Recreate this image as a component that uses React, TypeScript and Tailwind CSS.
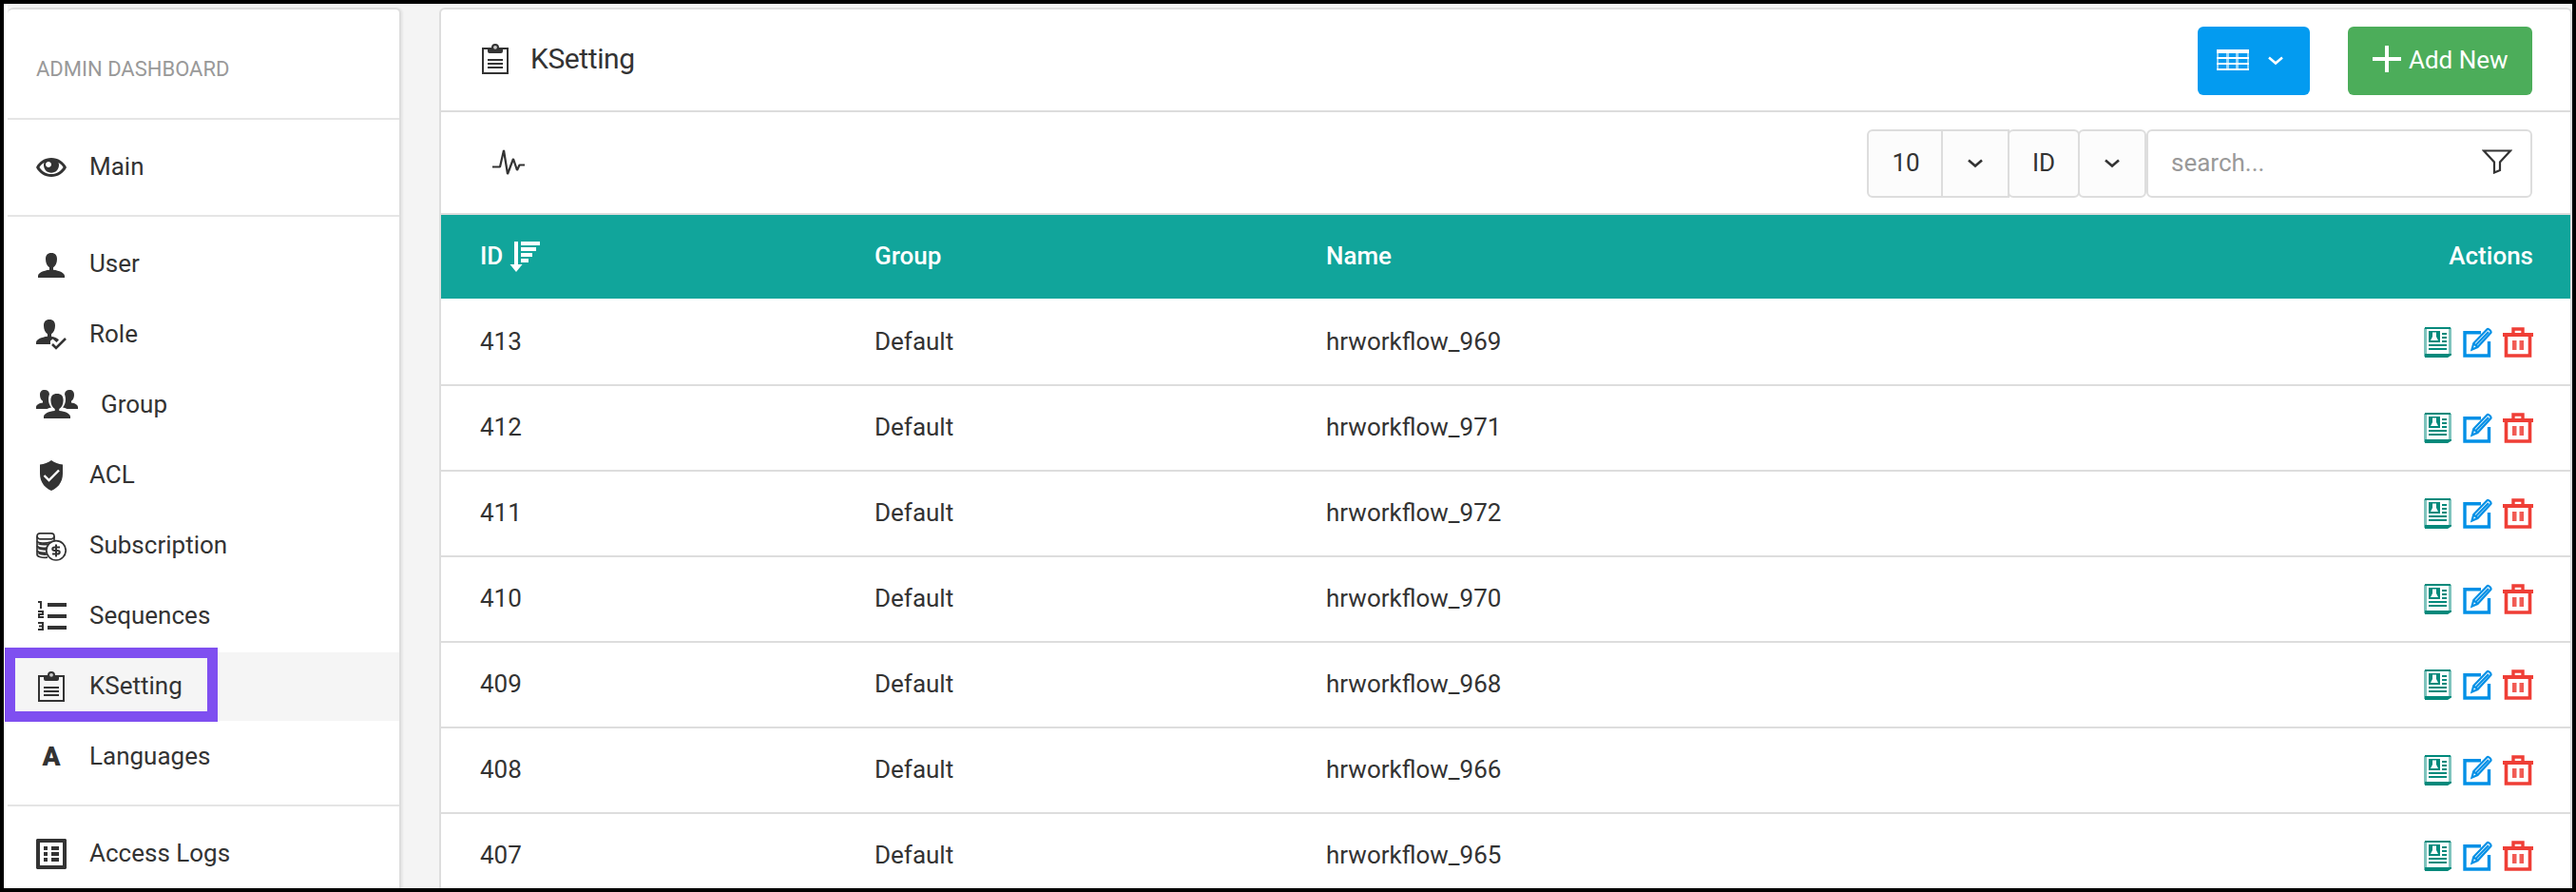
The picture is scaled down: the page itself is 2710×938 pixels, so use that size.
import type { ReactNode } from "react";

type IconProps = { className?: string; width?: number; children: ReactNode };

function Glyph({ className = "", width = 32, children }: IconProps) {
  return (
    <svg width={width} height={32} viewBox={`0 0 ${width} 32`} fill="currentColor" className={`shrink-0 ${className}`}>
      {children}
    </svg>
  );
}

const EyeIcon = () => (
  <Glyph>
    <path d="M16 6c-6.979 0-13.028 4.064-16 10 2.972 5.936 9.021 10 16 10s13.027-4.064 16-10c-2.972-5.936-9.021-10-16-10zM23.889 11.303c1.88 1.199 3.473 2.805 4.67 4.697-1.197 1.891-2.79 3.498-4.67 4.697-2.362 1.507-5.09 2.303-7.889 2.303s-5.527-0.796-7.889-2.303c-1.88-1.199-3.473-2.805-4.67-4.697 1.197-1.891 2.79-3.498 4.67-4.697 0.122-0.078 0.246-0.154 0.371-0.228-0.311 0.854-0.482 1.776-0.482 2.737 0 4.418 3.582 8 8 8s8-3.582 8-8c0-0.962-0.17-1.883-0.482-2.737 0.124 0.074 0.248 0.15 0.371 0.228zM16 13c0 1.657-1.343 3-3 3s-3-1.343-3-3 1.343-3 3-3 3 1.343 3 3z" />
  </Glyph>
);

const UserIcon = () => (
  <Glyph>
    <path d="M16 4c-4.200 0-6 2.400-6 6.600 0 3.700 1.500 7.200 4 8.700v2.500C7.500 22.500 2 25.200 2 28.200V30h28v-1.800c0-3-5.500-5.700-12-6.400v-2.500c2.500-1.500 4-5 4-8.700C22 6.400 20.200 4 16 4z" />
  </Glyph>
);

const RoleIcon = () => (
  <Glyph>
    <path d="M14 0c-4.200 0-6 2.400-6 6.600 0 3.700 1.500 7.200 4 8.700v2.500C5.500 18.500 0 21.200 0 24.200V26h15v-3.500l2.500-2 4 3.500 2.500-2.600c-2-1.800-4.800-3-8-3.600v-2.500c2.500-1.500 4-5 4-8.700C20 2.400 18.200 0 14 0z" />
    <path d="M17 26l4 4 10-10" fill="none" stroke="currentColor" strokeWidth="2.600" />
  </Glyph>
);

const GroupIcon = () => (
  <Glyph width={44}>
    <path d="M9 0C5.500 0 4 2 4 5.200c0 2.800 1.200 5.400 3 6.600v1.700C3 14 0 15.800 0 18.200V20h11.500c1.500-.8 3-1.300 4.500-1.500-1.800-2.300-3-5-3-8.500 0-2.300.5-4 1-5.500C13.700 1.500 12 0 9 0z" />
    <path d="M35 0c3.500 0 5 2 5 5.200 0 2.800-1.200 5.400-3 6.600v1.700c4 .5 7 2.300 7 4.700V20H32.500c-1.500-.8-3-1.300-4.500-1.500 1.800-2.300 3-5 3-8.500 0-2.300-.5-4-1-5.500C30.300 1.500 32 0 35 0z" />
    <path d="M22 4c-4.600 0-6.600 2.600-6.600 7 0 4 1.600 7.400 4.300 9v2C13.500 22.600 8 25 8 28v2h28v-2c0-3-5.500-5.400-11.700-6v-2c2.700-1.600 4.300-5 4.300-9 0-4.400-2-7-6.600-7z" />
  </Glyph>
);

const ShieldIcon = () => (
  <Glyph>
    <path d="M16 0c3.500 2.500 7.500 4 12 4.500V14c0 8-4 14.500-12 18C8 28.500 4 22 4 14V4.500C8.500 4 12.500 2.500 16 0z" />
    <path d="M8.500 16l5 5L24 10.500" fill="none" stroke="#fff" strokeWidth="2.400" />
  </Glyph>
);

const CoinsIcon = () => (
  <Glyph>
    <g fill="none" stroke="currentColor" strokeWidth="1.700">
      <rect x="1" y="2.800" width="18" height="6" rx="3" />
      <path d="M1 6v19c0 2.600 5 3.600 11 3.200M19 6v4" />
      <path d="M1 11c1 2.400 9 2.600 14 1M1 16c1 2 6 2.700 10.500 2.200M1 21c1 2 5 2.600 9.500 2.300M2 13.500c3 1.500 7 1.500 11 .8M2 18.500c3 1.500 6 1.500 9 1.300M2 23.500c3 1.700 6 1.700 9 1.500" />
      <circle cx="21" cy="20.800" r="10.200" fill="#fff" />
      <path d="M25 17.500h-5.500c-3 0-3 3.500 0 3.500h3c3 0 3 3.600 0 3.600H17M21 14.500v13" strokeWidth="2" />
    </g>
  </Glyph>
);

const NumberedIcon = () => (
  <Glyph>
    <path d="M12 2h20v4H12zM12 14h20v4H12zM12 26h20v4H12z" />
    <path d="M2 1h3v7M2 11h5v3H3v3h5M2 23h5v7H2M3 26.500h4" fill="none" stroke="currentColor" strokeWidth="2" />
  </Glyph>
);

const ClipboardIcon = () => (
  <Glyph>
    <path
      fillRule="evenodd"
      d="M2 4h28v28H2zM4 6v24h24V6h-4v2a2 2 0 0 1-2 2H10a2 2 0 0 1-2-2V6z M16 0a4 4 0 0 0-4 4h8a4 4 0 0 0-4-4z"
    />
    <circle cx="16" cy="3.800" r="1.900" fill="#fff" fillOpacity=".75" />
    <path d="M8 16h16v2H8zM8 20h16v2H8zM8 24h16v2H8z" />
  </Glyph>
);

const LetterIcon = () => (
  <span className="flex h-8 w-8 items-center justify-center text-[28px] leading-8 font-black">A</span>
);

const LogsIcon = () => (
  <Glyph>
    <path fillRule="evenodd" d="M1 0h30l1 1v30l-1 1H1l-1-1V1zM4 4v24h24V4z" />
    <path d="M8 8h4v4H8zM16 8h8v4h-8zM8 14h4v4H8zM16 14h8v4h-8zM8 20h4v4H8zM16 20h8v4h-8z" />
  </Glyph>
);

const PulseIcon = () => (
  <svg
    width="34"
    height="30"
    viewBox="0 0 34 30"
    fill="none"
    stroke="currentColor"
    strokeWidth="2.200"
    strokeLinejoin="bevel"
    className="mb-0.5"
  >
    <path d="M0 19.500h8L12 2l4 25 6-16 4 12 2.500-5.500H34" />
  </svg>
);

const SortIcon = () => (
  <Glyph className="text-white">
    <path d="M5 0h4v24h4.500L7 32 .500 24H5zM12 0h20v4H12zM12 6h16v4H12zM12 12h12v4H12zM12 18h8v4h-8z" />
  </Glyph>
);

const Chevron = () => (
  <svg width="16" height="10" viewBox="0 0 16 10" fill="none" stroke="currentColor" strokeWidth="2.600">
    <path d="M1 1.500l7 6 7-6" />
  </svg>
);

const TableIcon = () => (
  <svg width="34" height="22" viewBox="0 0 34 22" fill="currentColor" className="mb-0.5">
    <path d="M0 0h34v4H0zM0 8h34v2H0zM0 14h34v2H0zM0 20h34v2H0z" />
    <path d="M0 0h2v22H0zM10 2h3v20h-3zM20 2h3v20h-3zM32 0h2v22h-2z" fillOpacity=".6" />
  </svg>
);

const PlusIcon = () => (
  <svg width="30" height="28" viewBox="0 0 30 28" fill="currentColor" className="mb-1">
    <path d="M13 0h4v12h13v4H17v12h-4V16H0v-4h13z" />
  </svg>
);

const FilterIcon = () => (
  <svg
    width="32"
    height="26"
    viewBox="0 0 32 26"
    fill="none"
    stroke="currentColor"
    strokeWidth="2.200"
    className="mb-1"
  >
    <path d="M2 1.500h28L19 13.500v8.500L13 24.500v-11z" />
  </svg>
);

const DetailIcon = () => (
  <Glyph className="text-[#00897b]">
    <path d="M1 1h3v30H1zM27 1h3v28h-3z" fillOpacity=".5" />
    <path d="M2 0h27v2H2zM2 28h28v1.500L26 32H2z" />
    <path d="M6 4h12v12H6zM20 6h5v2h-5zM20 10h5v2h-5zM20 14h5v2h-5zM6 18h19v2H6zM6 22h19v2H6z" />
    <path d="M10 5.500h4v4.500l2 4H8l2-4z" fill="#fff" />
  </Glyph>
);

const EditIcon = () => (
  <Glyph className="text-[#0290e6]">
    <path d="M19 5.800H2V30H27.500V15" fill="none" stroke="currentColor" strokeWidth="3.400" />
    <path
      d="M9.500 23.500l1.800-6.500L25.500 2.200c1.200-1.200 5 2.200 3.800 3.800L15.500 21zM11.500 17.500l4 3.500M14 18.500L27 5"
      fill="none"
      stroke="currentColor"
      strokeWidth="2.200"
    />
  </Glyph>
);

const TrashIcon = () => (
  <Glyph className="text-[#ef3e36]">
    <path d="M0 6h32v4H0z" />
    <path d="M11 7V2h10v5" fill="none" stroke="currentColor" strokeWidth="3.400" />
    <path d="M3.500 9v21h25V9" fill="none" stroke="currentColor" strokeWidth="3.600" />
    <path d="M10 14h4.500v10H10zM17.500 14H22v10h-4.500z" fillOpacity=".85" />
  </Glyph>
);

type Item = { label: string; icon: ReactNode; active?: boolean };

const sections: Item[][] = [
  [{ label: "Main", icon: <EyeIcon /> }],
  [
    { label: "User", icon: <UserIcon /> },
    { label: "Role", icon: <RoleIcon /> },
    { label: "Group", icon: <GroupIcon /> },
    { label: "ACL", icon: <ShieldIcon /> },
    { label: "Subscription", icon: <CoinsIcon /> },
    { label: "Sequences", icon: <NumberedIcon /> },
    { label: "KSetting", icon: <ClipboardIcon />, active: true },
    { label: "Languages", icon: <LetterIcon /> },
  ],
  [{ label: "Access Logs", icon: <LogsIcon /> }],
];

const rows = [
  { id: 413, name: "hrworkflow_969" },
  { id: 412, name: "hrworkflow_971" },
  { id: 411, name: "hrworkflow_972" },
  { id: 410, name: "hrworkflow_970" },
  { id: 409, name: "hrworkflow_968" },
  { id: 408, name: "hrworkflow_966" },
  { id: 407, name: "hrworkflow_965" },
];

function Sidebar() {
  return (
    <aside className="mt-1 ml-1 h-[940px] w-[414px] shrink-0 rounded-t-md border-t-2 border-r-2 border-[#ddd] bg-white shadow-[2px_0_2px_rgba(0,0,0,0.05)]">
      <div className="flex h-[114px] items-center pt-3 pl-[30px] text-[22px] text-[#999] uppercase">
        Admin Dashboard
      </div>
      {sections.map((items, i) => (
        <nav key={i} className="flex flex-col gap-0.5 border-t-2 border-[#e5e5e5] py-3.5">
          {items.map((item) => (
            <a
              key={item.label}
              className={`relative flex h-[72px] items-center gap-6 pl-[30px] ${item.active ? "bg-[#f5f5f5]" : ""}`}
            >
              {item.icon}
              <span className="pb-0.5">{item.label}</span>
              {item.active && (
                <span className="absolute -top-[5px] -left-[3px] h-[78px] w-[224px] border-[11px] border-[#7f4ff0]" />
              )}
            </a>
          ))}
        </nav>
      ))}
    </aside>
  );
}

function Toolbar() {
  const box = "flex h-[72px] items-center justify-center border-2 border-[#ddd] bg-[#fcfcfc]";
  return (
    <div className="flex h-[108px] items-center justify-between border-b-2 border-[#ddd] pt-0.5 pr-10 pl-[54px]">
      <PulseIcon />
      <div className="flex">
        <div className={`${box} w-20 rounded-l-md pb-0.5 pl-0.5`}>10</div>
        <div className={`${box} -ml-0.5 w-[72px]`}>
          <Chevron />
        </div>
        <div className={`${box} -ml-0.5 w-[76px] rounded-md pb-0.5`}>ID</div>
        <div className={`${box} -ml-0.5 w-[72px] rounded-md`}>
          <Chevron />
        </div>
        <div className="flex h-[72px] w-[406px] items-center justify-between rounded-md border-2 border-[#ddd] bg-white pr-[19px] pl-6">
          <span className="pb-0.5 text-[#999]">search...</span>
          <FilterIcon />
        </div>
      </div>
    </div>
  );
}

const columns = "grid grid-cols-[415px_475px_1fr_auto] items-center pr-[39px] pl-[41px]";

export default function App() {
  return (
    <div className="h-[938px] w-[2710px] overflow-hidden border-4 border-black bg-[linear-gradient(to_right,#fff_4px,#f4f4f4_4px)] font-['Roboto',sans-serif] text-[26px] leading-10 text-[#333]">
      <div className="flex h-full items-start overflow-hidden">
        <Sidebar />
        <main className="mt-1 ml-10 h-[940px] w-[2244px] shrink-0 rounded-t-md border-2 border-[#ddd] bg-white">
          <header className="flex h-[108px] items-center justify-between border-b-2 border-[#ddd] pt-0.5 pr-10 pl-[41px]">
            <div className="flex items-center gap-[21px] pb-1 text-[30px] tracking-[-0.4px]">
              <ClipboardIcon />
              <span>KSetting</span>
            </div>
            <div className="flex gap-10 text-white">
              <button className="flex h-[72px] w-[118px] items-center gap-5 rounded-md bg-[#039bf0] pl-5">
                <TableIcon />
                <Chevron />
              </button>
              <button className="flex h-[72px] w-[194px] items-center gap-2 rounded-md bg-[#4cad5a] pl-[26px] whitespace-nowrap">
                <PlusIcon />
                <span className="pb-0.5">Add New</span>
              </button>
            </div>
          </header>
          <Toolbar />
          <div className={`${columns} h-[88px] bg-[#11a59b] font-medium text-white`}>
            <div className="flex items-center gap-[7px]">
              <span className="pb-0.5">ID</span>
              <SortIcon />
            </div>
            <div className="pb-0.5">Group</div>
            <div className="pb-0.5">Name</div>
            <div className="pb-0.5">Actions</div>
          </div>
          {rows.map((row, i) => (
            <div key={row.id} className={`${columns} h-[90px] border-t-2 ${i === 0 ? "border-white" : "border-[#ddd]"}`}>
              <div className="pb-0.5">{row.id}</div>
              <div className="pb-0.5">Default</div>
              <div className="pb-0.5">{row.name}</div>
              <div className="flex items-center gap-2.5">
                <DetailIcon />
                <EditIcon />
                <TrashIcon />
              </div>
            </div>
          ))}
        </main>
      </div>
    </div>
  );
}
